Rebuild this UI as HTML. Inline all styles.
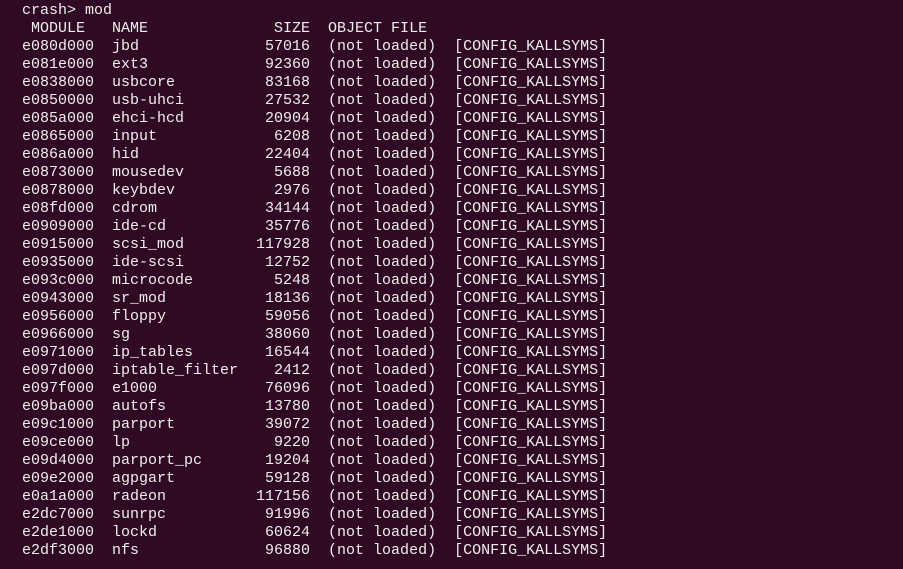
<!DOCTYPE html>
<html><head><meta charset="utf-8"><style>
html,body{margin:0;padding:0;background:#300a24;width:903px;height:569px;overflow:hidden}
pre{margin:0;position:absolute;left:22px;top:2px;font-family:"Liberation Mono",monospace;font-size:15px;line-height:18px;color:#eeeeec;white-space:pre}
</style></head><body><pre>crash&gt; mod
 MODULE   NAME              SIZE  OBJECT FILE
e080d000  jbd              57016  (not loaded)  [CONFIG_KALLSYMS]
e081e000  ext3             92360  (not loaded)  [CONFIG_KALLSYMS]
e0838000  usbcore          83168  (not loaded)  [CONFIG_KALLSYMS]
e0850000  usb-uhci         27532  (not loaded)  [CONFIG_KALLSYMS]
e085a000  ehci-hcd         20904  (not loaded)  [CONFIG_KALLSYMS]
e0865000  input             6208  (not loaded)  [CONFIG_KALLSYMS]
e086a000  hid              22404  (not loaded)  [CONFIG_KALLSYMS]
e0873000  mousedev          5688  (not loaded)  [CONFIG_KALLSYMS]
e0878000  keybdev           2976  (not loaded)  [CONFIG_KALLSYMS]
e08fd000  cdrom            34144  (not loaded)  [CONFIG_KALLSYMS]
e0909000  ide-cd           35776  (not loaded)  [CONFIG_KALLSYMS]
e0915000  scsi_mod        117928  (not loaded)  [CONFIG_KALLSYMS]
e0935000  ide-scsi         12752  (not loaded)  [CONFIG_KALLSYMS]
e093c000  microcode         5248  (not loaded)  [CONFIG_KALLSYMS]
e0943000  sr_mod           18136  (not loaded)  [CONFIG_KALLSYMS]
e0956000  floppy           59056  (not loaded)  [CONFIG_KALLSYMS]
e0966000  sg               38060  (not loaded)  [CONFIG_KALLSYMS]
e0971000  ip_tables        16544  (not loaded)  [CONFIG_KALLSYMS]
e097d000  iptable_filter    2412  (not loaded)  [CONFIG_KALLSYMS]
e097f000  e1000            76096  (not loaded)  [CONFIG_KALLSYMS]
e09ba000  autofs           13780  (not loaded)  [CONFIG_KALLSYMS]
e09c1000  parport          39072  (not loaded)  [CONFIG_KALLSYMS]
e09ce000  lp                9220  (not loaded)  [CONFIG_KALLSYMS]
e09d4000  parport_pc       19204  (not loaded)  [CONFIG_KALLSYMS]
e09e2000  agpgart          59128  (not loaded)  [CONFIG_KALLSYMS]
e0a1a000  radeon          117156  (not loaded)  [CONFIG_KALLSYMS]
e2dc7000  sunrpc           91996  (not loaded)  [CONFIG_KALLSYMS]
e2de1000  lockd            60624  (not loaded)  [CONFIG_KALLSYMS]
e2df3000  nfs              96880  (not loaded)  [CONFIG_KALLSYMS]</pre></body></html>
